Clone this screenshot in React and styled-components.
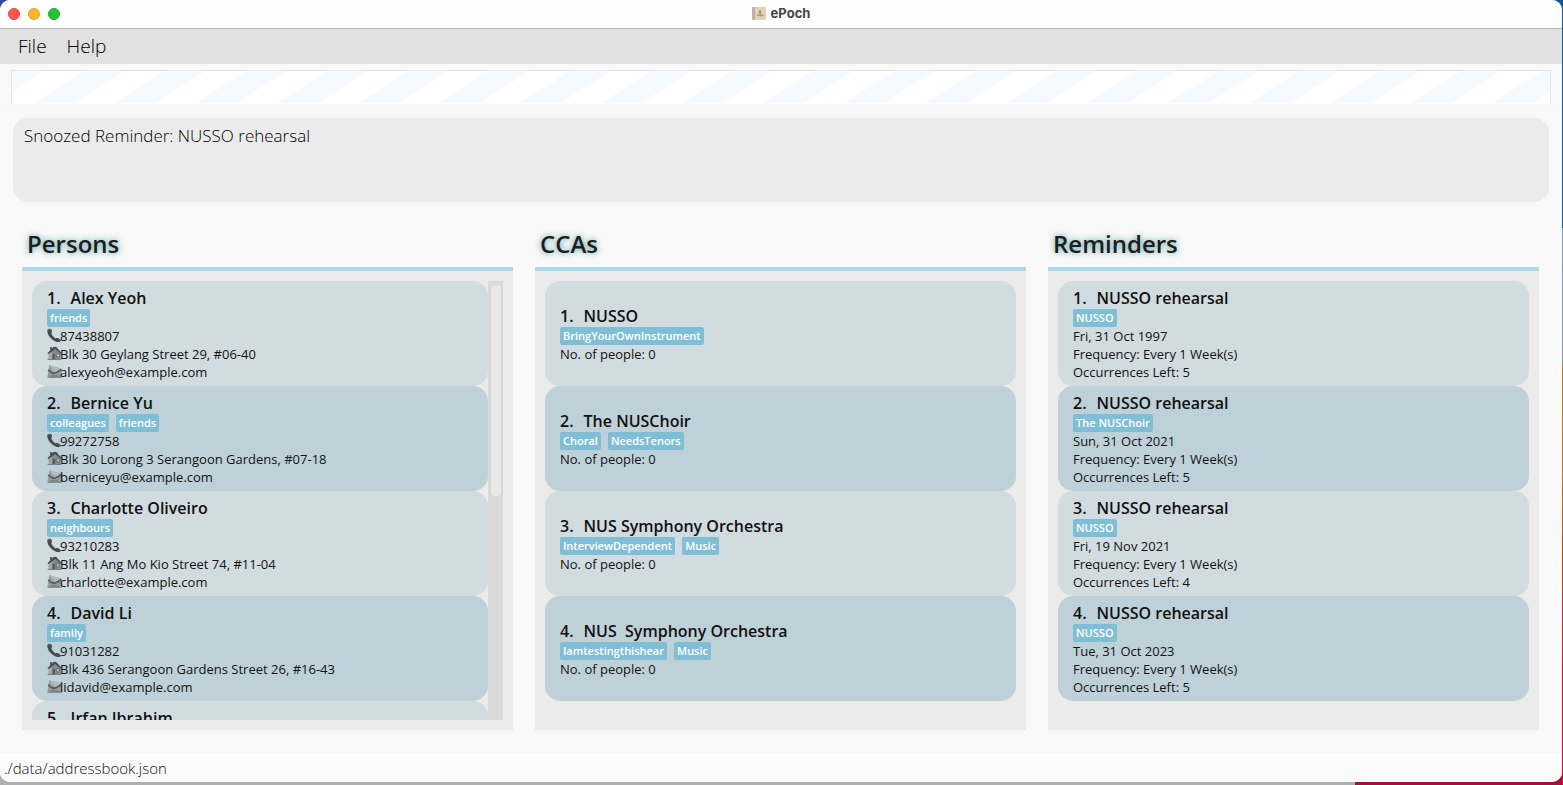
import React from "react";
import styled, { createGlobalStyle } from "styled-components";

const GlobalStyle = createGlobalStyle`
  *, *::before, *::after { box-sizing: border-box; }
  body {
    margin: 0;
    font-family: "Open Sans", "Noto Sans", sans-serif;
    color: #111;
  }
`;

const Desktop = styled.div`
  display: flex;
  height: 100vh;
  min-height: 480px;
  padding: 0 1px 3px 0;
  background:
    linear-gradient(#0b5c98 0 29%, #7e9ac8 29%, #8a9ba8 46%, #b87818 47%, #bd7424 60%, #bc4a24 70%, #c81838 85%, #d01040) right top / 1px 100% no-repeat,
    linear-gradient(90deg, #3a46a0 0 50%, #0b5c98 50%) left top / 100% 12px no-repeat,
    linear-gradient(90deg, #b0b0b0 0 1355px, #a8103c 1355px);
`;

const Window = styled.div`
  flex: 1;
  min-width: 0;
  display: flex;
  flex-direction: column;
  overflow: hidden;
  border-radius: 10px;
  background: #f9f9f9;
`;

const TitleBar = styled.header`
  flex: none;
  display: grid;
  grid-template-columns: 1fr auto 1fr;
  align-items: center;
  height: 29px;
  padding: 0 8px 1px;
  border-bottom: 1px solid #b4b4b4;
  background: #fefefe;
`;

const Lights = styled.div`
  display: flex;
  gap: 8px;
`;

const Light = styled.button`
  width: 12px;
  height: 12px;
  padding: 0;
  border: 1px solid ${(p) => p.$edge};
  border-radius: 50%;
  background: ${(p) => p.$fill};
`;

const WindowTitle = styled.h1`
  display: flex;
  align-items: center;
  gap: 5px;
  margin: 0;
  padding-bottom: 1px;
  font: 700 13px/16px Inter, sans-serif;
  color: #444;
`;

const MenuBar = styled.nav`
  flex: none;
  display: flex;
  gap: 20px;
  height: 35px;
  padding: 0 18px;
  background: #e1e1e1;
`;

const MenuButton = styled.button`
  align-self: flex-start;
  padding: 0;
  border: 0;
  background: none;
  font: 300 19px/34px "Open Sans", sans-serif;
  color: #000;
`;

const CommandBox = styled.div`
  flex: none;
  display: flex;
  padding: 6px 11px;
  border-bottom: 1px solid #f6f6f6;
`;

const CommandInput = styled.input`
  flex: 1;
  min-width: 0;
  height: 34px;
  padding: 0 10px;
  border: 1px solid #e6e6e6;
  border-bottom-color: #fff;
  border-radius: 0;
  outline: none;
  font: 300 17px "Open Sans", sans-serif;
  background: repeating-linear-gradient(
    147.1deg,
    #f4faff 0 17px,
    #fff 17px 39px,
    #f4faff 39px 44px
  );
`;

const ResultBox = styled.div`
  flex: none;
  padding: 7px 13px 0;
`;

const ResultText = styled.textarea`
  display: block;
  width: 100%;
  height: 84px;
  padding: 6px 11px;
  border: 0;
  border-radius: 15px;
  outline: none;
  resize: none;
  background: #ebebeb;
  font: 300 17px/24px "Open Sans", sans-serif;
  color: #000;
`;

const Columns = styled.main`
  flex: 1;
  min-height: 0;
  display: grid;
  grid-template-columns: repeat(3, minmax(0, 1fr));
  gap: 22px;
  padding: 20px 23px 22px 22px;
`;

const Column = styled.section`
  display: flex;
  flex-direction: column;
  min-height: 0;
`;

const ColumnTitle = styled.h2`
  flex: none;
  margin: 0;
  padding: 5px 5px 6px;
  font-size: 24px;
  line-height: 34px;
  font-weight: 600;
  color: #1a2022;
  text-shadow: 0 0 6px rgba(0, 110, 110, 0.7);
`;

const Panel = styled.div`
  flex: 1;
  min-height: 0;
  display: flex;
  padding: 10px;
  border-top: 4px solid #add8e6;
  background: #ebebeb;
`;

const List = styled.ol`
  flex: 1;
  min-width: 0;
  overflow: hidden;
  margin: 0;
  padding: 0;
  list-style: none;
`;

const Card = styled.li`
  display: flex;
  flex-direction: column;
  justify-content: ${(p) => (p.$centered ? "center" : "flex-start")};
  min-height: 105px;
  padding: 5px 15px;
  border-radius: 15px;
  background: #d1dce0;
  &:nth-child(even) { background: #bfd1d8; }
`;

const CardTitle = styled.h3`
  display: flex;
  gap: 10px;
  margin: 0;
  padding-top: 2px;
  font-size: 16px;
  line-height: 21px;
  font-weight: 600;
  white-space: pre;
`;

const Tags = styled.div`
  display: flex;
  gap: 7px;
`;

const Tag = styled.span`
  height: 18px;
  padding: 0 3px;
  border-radius: 2px;
  background: #80bed6;
  font-size: 11px;
  line-height: 18px;
  font-weight: 600;
  color: #fff;
`;

const Line = styled.p`
  display: flex;
  margin: 0;
  font-size: 13px;
  line-height: 18px;
  white-space: nowrap;
`;

const LineIcon = styled.svg`
  flex: none;
  width: 15px;
  height: 15px;
  margin: 1px -2px 0 0;
`;

const ScrollTrack = styled.div`
  flex: none;
  width: 15px;
  padding: 4px 2px 4px 3px;
  background: #d9d9d9;
`;

const ScrollThumb = styled.div`
  height: 49%;
  border-radius: 4px;
  background: #e8e8e8;
`;

const StatusBar = styled.footer`
  flex: none;
  height: 30px;
  padding: 0 4px;
  border-top: 1px solid #f6f6f6;
  background: #fbfbfb;
  font-size: 15px;
  line-height: 30px;
  font-weight: 300;
`;

const BookIcon = () => (
  <svg width="14" height="13" viewBox="0 0 14 13" aria-hidden="true">
    <rect width="14" height="13" rx="1" fill="#e6d3b4" />
    <rect width="3" height="13" rx="1" fill="#b9b3b3" />
    <rect x="3" width="1" height="13" fill="#d8cdbd" />
    <circle cx="8" cy="4.6" r="1.6" fill="#a59a8c" />
    <path d="M7.3 5.5h1.4v1.6l2.6.7v1.4H4.9V7.8l2.4-.7z" fill="#a59a8c" />
  </svg>
);

const PhoneIcon = () => (
  <LineIcon viewBox="0 0 15 15" aria-hidden="true">
    <path
      d="M.3 2.200C.8.8 2.800.3 4 1.100 5.300 2.300 5.400 4 4.300 5.200 5 7.200 6.800 9.200 8.800 10.400 9.900 9.700 11.200 10 12.300 11l1.800 1.400c-.6 1.300-2.400 1.900-4.200 1.500C5.200 12.700 0 7.400.3 2.200z"
      fill="#444b4e"
    />
    <path d="M1.600 2.300c.6-.8 1.500-.9 2.200-.3" fill="none" stroke="#7b8285" strokeWidth=".8" />
  </LineIcon>
);

const HouseIcon = () => (
  <LineIcon viewBox="0 0 15 15" aria-hidden="true">
    <path d="M2 7 8 1.500 13.700 7V13.500H2z" fill="#858b8d" />
    <path d="M1.500 7.300 5 4.500v9H1.500z" fill="#a0a6a8" />
    <path d="M3 1h2.200v3.200H3z" fill="#5b6265" />
    <path d="M.4 7.200 6.400 1 9 .8l5.700 6.200-1.200.8L8.300 3 1.700 8z" fill="#484f52" />
    <path d="M5.600 8h2.500v5.300H5.600z" fill="#555c5f" />
    <path d="M9.400 7.800h3v3h-3z" fill="#c3cacd" stroke="#555c5f" strokeWidth=".7" />
    <path d="M.6 13h13.800v1H.6z" fill="#777e80" />
  </LineIcon>
);

const MailIcon = () => (
  <LineIcon viewBox="0 0 15 15" aria-hidden="true">
    <path d="M2.200 1.200 14.600 4.800 15 13.800H.3z" fill="#969da0" />
    <path d="M2.200 1.200 14.600 4.800 8 8.400z" fill="#b2b9bc" />
    <path d="M1.200 5.800C3.500 8.600 6 9.600 8.200 9 10.800 8.300 12.400 6.800 14.400 5.400" fill="none" stroke="#555c5f" strokeWidth="1.700" />
    <path d="M.3 13.800 5.500 10.200 11 11.500 15 13.800z" fill="#7d8487" />
  </LineIcon>
);

const PERSONS = [
  ["Alex Yeoh", ["friends"], "87438807", "Blk 30 Geylang Street 29, #06-40", "alexyeoh@example.com"],
  ["Bernice Yu", ["colleagues", "friends"], "99272758", "Blk 30 Lorong 3 Serangoon Gardens, #07-18", "berniceyu@example.com"],
  ["Charlotte Oliveiro", ["neighbours"], "93210283", "Blk 11 Ang Mo Kio Street 74, #11-04", "charlotte@example.com"],
  ["David Li", ["family"], "91031282", "Blk 436 Serangoon Gardens Street 26, #16-43", "lidavid@example.com"],
  ["Irfan Ibrahim", []],
];

const CCAS = [
  ["NUSSO", ["BringYourOwnInstrument"]],
  ["The NUSChoir", ["Choral", "NeedsTenors"]],
  ["NUS Symphony Orchestra", ["InterviewDependent", "Music"]],
  ["NUS  Symphony Orchestra", ["Iamtestingthishear", "Music"]],
];

const REMINDERS = [
  ["NUSSO", "Fri, 31 Oct 1997", 5],
  ["The NUSChoir", "Sun, 31 Oct 2021", 5],
  ["NUSSO", "Fri, 19 Nov 2021", 4],
  ["NUSSO", "Tue, 31 Oct 2023", 5],
];

function Entry({ index, name, tags, centered, children }) {
  return (
    <Card $centered={centered}>
      <CardTitle>
        <span>{index + 1}.</span>
        <span>{name}</span>
      </CardTitle>
      <Tags>
        {tags.map((tag) => (
          <Tag key={tag}>{tag}</Tag>
        ))}
      </Tags>
      {children}
    </Card>
  );
}

function ListColumn({ title, scrolls, children }) {
  return (
    <Column>
      <ColumnTitle>{title}</ColumnTitle>
      <Panel>
        <List>{children}</List>
        {scrolls && (
          <ScrollTrack>
            <ScrollThumb />
          </ScrollTrack>
        )}
      </Panel>
    </Column>
  );
}

export default function App() {
  return (
    <>
      <GlobalStyle />
      <Desktop>
        <Window>
          <TitleBar>
            <Lights>
              <Light aria-label="Close" $fill="#ff5650" $edge="#e0443e" />
              <Light aria-label="Minimise" $fill="#ffb429" $edge="#dfa023" />
              <Light aria-label="Zoom" $fill="#22c337" $edge="#1aab29" />
            </Lights>
            <WindowTitle>
              <BookIcon />
              ePoch
            </WindowTitle>
          </TitleBar>
          <MenuBar>
            <MenuButton>File</MenuButton>
            <MenuButton>Help</MenuButton>
          </MenuBar>
          <CommandBox>
            <CommandInput aria-label="Command" />
          </CommandBox>
          <ResultBox>
            <ResultText aria-label="Result" readOnly value="Snoozed Reminder: NUSSO rehearsal" />
          </ResultBox>
          <Columns>
            <ListColumn title="Persons" scrolls>
              {PERSONS.map(([name, tags, phone, address, email], i) => (
                <Entry key={name} index={i} name={name} tags={tags}>
                  {phone && <Line><PhoneIcon />{phone}</Line>}
                  {address && <Line><HouseIcon />{address}</Line>}
                  {email && <Line><MailIcon />{email}</Line>}
                </Entry>
              ))}
            </ListColumn>
            <ListColumn title="CCAs">
              {CCAS.map(([name, tags], i) => (
                <Entry key={name} index={i} name={name} tags={tags} centered>
                  <Line>No. of people: 0</Line>
                </Entry>
              ))}
            </ListColumn>
            <ListColumn title="Reminders">
              {REMINDERS.map(([cca, date, left], i) => (
                <Entry key={date} index={i} name="NUSSO rehearsal" tags={[cca]}>
                  <Line>{date}</Line>
                  <Line>Frequency: Every 1 Week(s)</Line>
                  <Line>Occurrences Left: {left}</Line>
                </Entry>
              ))}
            </ListColumn>
          </Columns>
          <StatusBar>./data/addressbook.json</StatusBar>
        </Window>
      </Desktop>
    </>
  );
}
